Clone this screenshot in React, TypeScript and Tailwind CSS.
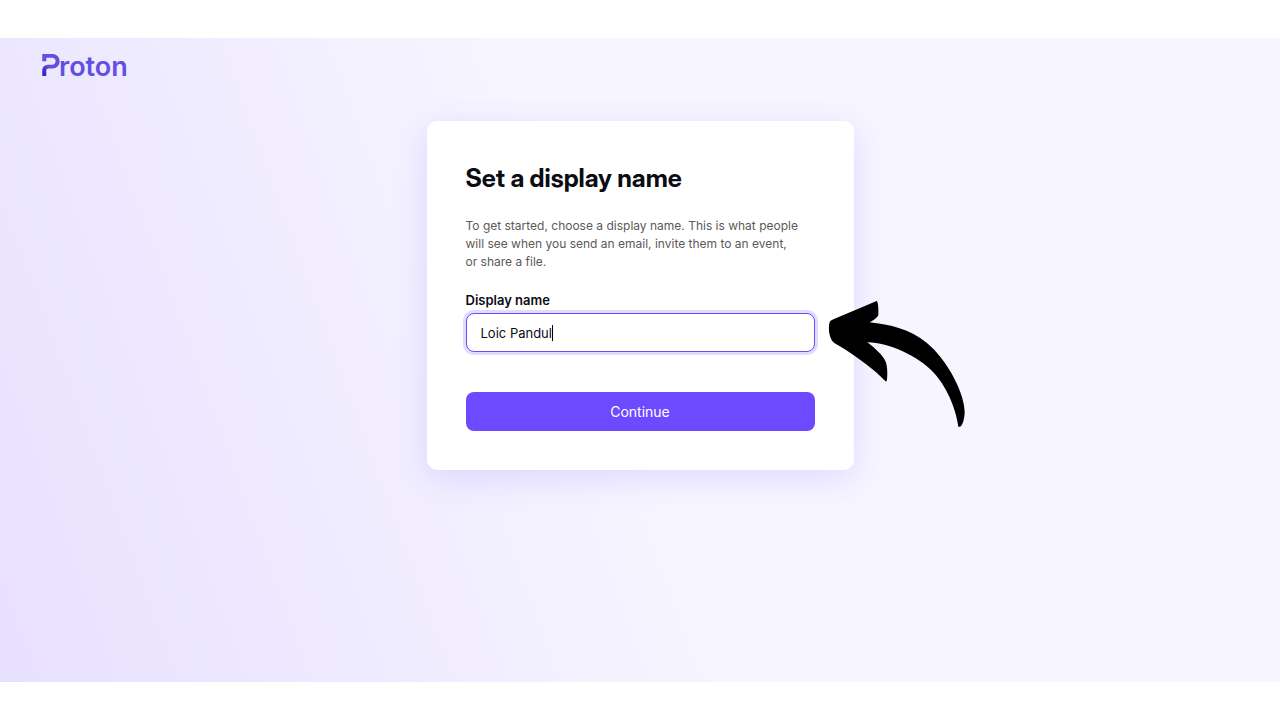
import { useState } from 'react';
import { SiProton } from 'react-icons/si';

/** First sign-in step: asks for the name shown to mail, calendar and drive contacts. */
export default function App() {
  return (
    <div className="min-h-screen flex flex-col bg-white py-[38px] font-['Inter',sans-serif]">
      <div className="flex-1 flex flex-col bg-[linear-gradient(70deg,#e7e0ff,#f7f5ff_49%)]">
        <header className="flex px-10 pt-[11px]">
          <Logo />
        </header>
        <main className="flex justify-center px-4 pt-9 pb-16">
          <DisplayNameCard />
        </main>
      </div>
    </div>
  );
}

function Logo() {
  return (
    <a href="#" aria-label="Proton" className="relative flex h-9 items-baseline text-[#6150e0]">
      <svg aria-hidden="true" className="absolute size-0">
        <defs>
          <linearGradient id="proton-mark" x1="0" y1="1" x2="0.5" y2="0.5">
            <stop offset="0.2" stopColor="#3c22b4" />
            <stop offset="0.8" stopColor="#6150e0" />
          </linearGradient>
        </defs>
      </svg>
      <SiProton className="size-[22px] fill-[url(#proton-mark)]" />
      <span className="-ml-[3px] text-[27px] leading-9 font-semibold">roton</span>
    </a>
  );
}

function DisplayNameCard() {
  const [name, setName] = useState('Loic Pandul');

  return (
    <div className="relative w-full max-w-[427px] rounded-[10px] bg-white p-[39px] shadow-[0_8px_32px_rgba(109,74,255,0.16)]">
      <h1 className="font-['Inter_Display','Inter',sans-serif] text-[25px] leading-9 font-bold text-[#0c0c14]">
        Set a display name
      </h1>
      <p className="mt-[21px] text-[12px] leading-[18px] text-[#5c5958]">
        To get started, choose a display name. This is what people
        <br />
        will see when you send an email, invite them to an event,
        <br />
        or share a file.
      </p>
      <form onSubmit={(e) => e.preventDefault()}>
        <label htmlFor="display-name" className="mt-5 block text-[13px] leading-[18px] font-semibold text-[#0c0c14]">
          Display name
        </label>
        <div className="relative mt-1">
          <input
            id="display-name"
            type="text"
            value={name}
            onChange={(e) => setName(e.target.value)}
            className="block h-[39px] w-full rounded-lg border border-[#6d4aff] bg-white px-[14px] text-[13px] text-[#0c0c14] caret-transparent ring-3 ring-[#e2dbff] outline-none"
          />
          <Caret text={name} />
        </div>
        <button type="submit" className="mt-10 h-[39px] w-full rounded-lg bg-[#6d4aff] text-[14px] text-white">
          Continue
        </button>
      </form>
      <Arrow />
    </div>
  );
}

// Steady caret after the typed text; the hidden copy of the text gives its offset.
function Caret({ text }: { text: string }) {
  return (
    <div aria-hidden="true" className="pointer-events-none absolute inset-0 flex items-center px-[15px] text-[13px]">
      <span className="invisible whitespace-pre">{text}</span>
      <span className="h-4 w-px bg-black" />
    </div>
  );
}

function Arrow() {
  return (
    <svg
      aria-hidden="true"
      viewBox="54 30 414 384"
      className="pointer-events-none absolute top-[179px] left-[401px] h-[128px] w-[138px]"
    >
      <path d="M200 33C204 33 206 60 205 74C202 84 190 91 178 97C240 104 300 117 350 158C412 209 466 312 464 370C462 395 455 410 450 410L445 410C440 370 418 300 372 249C325 198 232 156 172 157C195 175 218 195 227 215C233 230 233 262 230 274C226 275 222 268 200 248C160 215 110 180 74 160C62 152 55 130 57 105C58 95 62 90 72 87Z" />
    </svg>
  );
}
